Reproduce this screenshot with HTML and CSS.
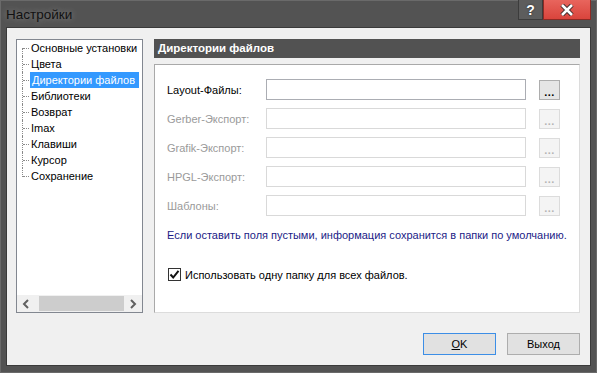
FILE: index.html
```html
<!DOCTYPE html>
<html lang="ru">
<head>
    <meta charset="UTF-8">
    <title>Настройки</title>
    <link rel="stylesheet" href="styles.css">
</head>
<body>
    <div class="window">
        <div class="titlebar">
            <span class="title">Настройки</span>
            <div class="caption-buttons">
                <div class="cap-help">?</div>
                <div class="cap-close">
                    <svg width="14" height="12" viewBox="0 0 14 12"><path d="M2 1 L12 11 M12 1 L2 11" stroke="#3a2a2a" stroke-width="4.5"/><path d="M2 1 L12 11 M12 1 L2 11" stroke="#fff" stroke-width="2.6"/></svg>
                </div>
            </div>
        </div>
        <div class="client">
            <div class="main">
                <div class="tree">
                    <ul class="tree-list">
                        <li><span>Основные установки</span></li>
                        <li><span>Цвета</span></li>
                        <li class="selected"><span>Директории файлов</span></li>
                        <li><span>Библиотеки</span></li>
                        <li><span>Возврат</span></li>
                        <li><span>Imax</span></li>
                        <li><span>Клавиши</span></li>
                        <li><span>Курсор</span></li>
                        <li><span>Сохранение</span></li>
                    </ul>
                    <div class="hscroll">
                        <div class="arrow">
                            <svg width="8" height="10" viewBox="0 0 8 10"><path d="M6 1 L2 5 L6 9" fill="none" stroke="#606060" stroke-width="2"/></svg>
                        </div>
                        <div class="track-gap"></div>
                        <div class="thumb"></div>
                        <div class="arrow">
                            <svg width="8" height="10" viewBox="0 0 8 10"><path d="M2 1 L6 5 L2 9" fill="none" stroke="#606060" stroke-width="2"/></svg>
                        </div>
                    </div>
                </div>
                <div class="page">
                    <div class="page-header">Директории файлов</div>
                    <div class="page-body">
                        <div class="row">
                            <label>Layout-Файлы:</label>
                            <div class="field"></div>
                            <div class="browse">...</div>
                        </div>
                        <div class="row disabled">
                            <label>Gerber-Экспорт:</label>
                            <div class="field"></div>
                            <div class="browse">...</div>
                        </div>
                        <div class="row disabled">
                            <label>Grafik-Экспорт:</label>
                            <div class="field"></div>
                            <div class="browse">...</div>
                        </div>
                        <div class="row disabled">
                            <label>HPGL-Экспорт:</label>
                            <div class="field"></div>
                            <div class="browse">...</div>
                        </div>
                        <div class="row disabled">
                            <label>Шаблоны:</label>
                            <div class="field"></div>
                            <div class="browse">...</div>
                        </div>
                        <div class="hint">Если оставить поля пустыми, информация сохранится в папки по умолчанию.</div>
                        <div class="check-row">
                            <div class="checkbox">
                                <svg width="11" height="11" viewBox="0 0 11 11"><path d="M1.5 5.5 L4.2 8.5 L9.5 1.8" fill="none" stroke="#111" stroke-width="2"/></svg>
                            </div>
                            <span>Использовать одну папку для всех файлов.</span>
                        </div>
                    </div>
                </div>
            </div>
            <div class="footer">
                <div class="button default"><u>O</u>K</div>
                <div class="button">Выход</div>
            </div>
        </div>
    </div>
</body>
</html>
```

FILE: styles.css
```css
body { margin: 0; font-family: 'Liberation Sans', Arial, sans-serif; font-size: 11px; color: #000; background: #4b4b4b; }
.window { width: 597px; height: 373px; box-sizing: border-box; background: #535353; border: 1px solid #6a6a6a; display: flex; flex-direction: column; padding: 0 5px 6px 5px; }
.titlebar { height: 26px; display: flex; justify-content: space-between; align-items: flex-start; }
.title { font-size: 13.5px; color: #111; margin-top: 6px; text-shadow: 0 0 6px rgba(255,255,255,0.35); }
.caption-buttons { display: flex; margin-top: -1px; }
.cap-help { width: 25px; height: 20px; box-sizing: border-box; border: 1px solid #3c3c3c; border-top: none; background: #5d5d5d; color: #fff; font-weight: bold; font-size: 14px; display: flex; align-items: center; justify-content: center; text-shadow: 0 0 2px #222; }
.cap-close { width: 48px; height: 20px; box-sizing: border-box; border: 1px solid #8c2a24; border-top: none; background: linear-gradient(#e8655d, #d9443c); display: flex; align-items: center; justify-content: center; }

.client { flex: 1; background: #f0f0f0; display: flex; flex-direction: column; padding: 11px 10px 0 9px; border: 1px solid #3a3a3a; }
.main { display: flex; gap: 11px; height: 274px; }

.tree { width: 127px; box-sizing: border-box; border: 1px solid #828790; background: #fff; display: flex; flex-direction: column; justify-content: space-between; }
.tree-list { list-style: none; margin: 0; padding: 0 0 0 13px; }
.tree-list li { height: 16px; line-height: 16px; position: relative; white-space: nowrap; }
.tree-list li span { display: inline-block; padding: 0 1px; }
.tree-list li::before { content: ''; position: absolute; left: -7px; top: 8px; width: 6px; border-top: 1px dotted #8a8a8a; }
.tree-list li::after { content: ''; position: absolute; left: -8px; top: 0; height: 16px; border-left: 1px dotted #8a8a8a; }
.tree-list li:first-child::after { top: 8px; height: 8px; }
.tree-list li:last-child::after { height: 9px; }
.tree-list li.selected span { background: #3399ff; color: #fff; padding: 0 4px 0 2px; }

.hscroll { height: 17px; background: #f0f0f0; display: flex; }
.hscroll .arrow { width: 17px; display: flex; align-items: center; justify-content: center; }
.track-gap { width: 5px; }
.thumb { width: 85px; background: #cdcdcd; margin: 1px 0; }

.page { width: 426px; display: flex; flex-direction: column; gap: 6px; }
.page-header { height: 19px; line-height: 19px; background: #525252; color: #fff; font-weight: bold; font-size: 11.5px; padding-left: 4px; }
.page-body { flex: 1; background: #fff; border: 1px solid #a9a9a9; border-right-color: #dcdcdc; border-bottom-color: #dcdcdc; padding: 14px 0 0 12px; }

.row { display: flex; align-items: center; height: 21px; margin-bottom: 8px; }
.row label { width: 99px; }
.field { width: 260px; height: 21px; box-sizing: border-box; border: 1px solid #abadb3; background: #fff; }
.browse { width: 21px; height: 20px; box-sizing: border-box; margin-left: 13px; border: 1px solid #adadad; background: #e5e5e5; font-weight: bold; font-size: 11px; display: flex; align-items: flex-end; justify-content: center; line-height: 13px; letter-spacing: 0.5px; }
.row.disabled label { color: #9a9a9a; }
.row.disabled .field { border-color: #d9d9d9; }
.row.disabled .browse { border-color: #dcdcdc; background: #f4f4f4; color: #b5b5b5; }

.hint { color: #1b1b86; margin-top: 12px; height: 14px; line-height: 14px; white-space: nowrap; }
.check-row { display: flex; align-items: center; margin-top: 26px; }
.checkbox { width: 13px; height: 13px; box-sizing: border-box; border: 1px solid #333; background: #fff; display: flex; align-items: center; justify-content: center; margin: 0 4px 0 1px; }

.footer { display: flex; justify-content: flex-end; gap: 11px; margin-top: 20px; }
.button { width: 73px; height: 22px; box-sizing: border-box; border: 1px solid #adadad; background: #e1e1e1; display: flex; align-items: center; justify-content: center; }
.button.default { border-color: #3c8ee6; }
.button u { text-decoration: underline; }
```
